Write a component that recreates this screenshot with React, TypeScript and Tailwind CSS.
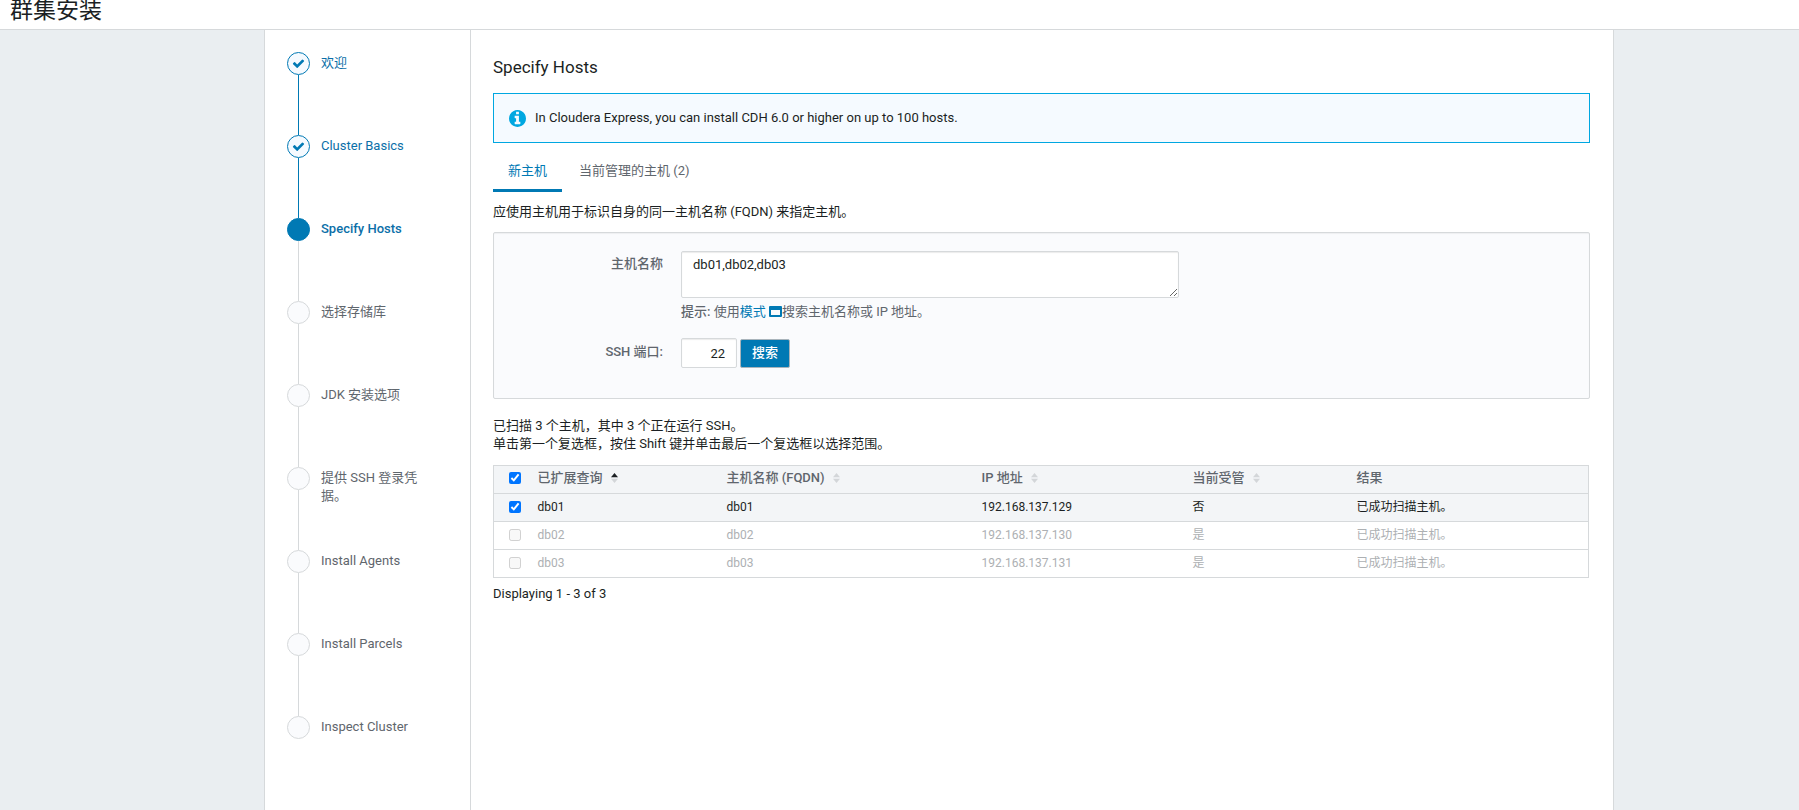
import React from "react";

type StepState = "done" | "current" | "todo";

const steps: { label: string; state: StepState }[] = [
  { label: "欢迎", state: "done" },
  { label: "Cluster Basics", state: "done" },
  { label: "Specify Hosts", state: "current" },
  { label: "选择存储库", state: "todo" },
  { label: "JDK 安装选项", state: "todo" },
  { label: "提供 SSH 登录凭据。", state: "todo" },
  { label: "Install Agents", state: "todo" },
  { label: "Install Parcels", state: "todo" },
  { label: "Inspect Cluster", state: "todo" },
];

const circleClass: Record<StepState, string> = {
  done: "border-[#0079b4] bg-[#f5faff]",
  current: "border-[#0079b4] bg-[#0079b4]",
  todo: "border-[#d6d9db] bg-[#fafbfd]",
};

const labelClass: Record<StepState, string> = {
  done: "text-[#0b6fa8]",
  current: "font-medium text-[#0b6fa8]",
  todo: "text-[#5f666d]",
};

const hosts = [
  { query: "db01", fqdn: "db01", ip: "192.168.137.129", managed: "否", result: "已成功扫描主机。", available: true },
  { query: "db02", fqdn: "db02", ip: "192.168.137.130", managed: "是", result: "已成功扫描主机。", available: false },
  { query: "db03", fqdn: "db03", ip: "192.168.137.131", managed: "是", result: "已成功扫描主机。", available: false },
];

function CheckIcon() {
  return (
    <svg viewBox="0 0 1792 1792" className="size-[13px] fill-[#0079b4]" aria-hidden="true">
      <path d="M1671 566q0 40-28 68l-724 724-136 136q-28 28-68 28t-68-28l-136-136-362-362q-28-28-28-68t28-68l136-136q28-28 68-28t68 28l294 295 656-657q28-28 68-28t68 28l136 136q28 28 28 68z" />
    </svg>
  );
}

function InfoIcon() {
  return (
    <svg viewBox="128 128 1536 1536" className="size-[17px] shrink-0 fill-[#00a7e1]" aria-hidden="true">
      <path d="M1152 1376v-160q0-14-9-23t-23-9h-96v-512q0-14-9-23t-23-9h-320q-14 0-23 9t-9 23v160q0 14 9 23t23 9h96v320h-96q-14 0-23 9t-9 23v160q0 14 9 23t23 9h448q14 0 23-9t9-23zm-128-896v-160q0-14-9-23t-23-9h-192q-14 0-23 9t-9 23v160q0 14 9 23t23 9h192q14 0 23-9t9-23zm640 416q0 209-103 385.5t-279.5 279.5-385.5 103-385.5-103-279.5-279.5-103-385.5 103-385.5 279.5-279.5 385.5-103 385.5 103 279.5 279.5 103 385.5z" />
    </svg>
  );
}

function WindowIcon() {
  return (
    <svg viewBox="0 0 13 11" className="inline-block h-[11px] w-[13px] align-[-1px]" aria-hidden="true">
      <path fill="#0079b4" fillRule="evenodd" d="M1 0h11a1 1 0 0 1 1 1v9a1 1 0 0 1-1 1H1a1 1 0 0 1-1-1V1a1 1 0 0 1 1-1zM2 4v5h9V4z" />
    </svg>
  );
}

function SortIcon({ ascending = false }: { ascending?: boolean }) {
  return (
    <svg viewBox="0 0 7 10" className="ml-2 inline-block h-[10px] w-[7px] align-[-1px]" aria-hidden="true">
      <path d="M3.5 0 7 4.2H0z" fill={ascending ? "#1b1f23" : "#d3d6d9"} />
      <path d="M3.5 10 7 5.8H0z" fill="#d3d6d9" />
    </svg>
  );
}

function Steps() {
  return (
    <ol className="w-[206px] shrink-0 border-r border-[#d6d9db] pt-[22px] pl-[22px]">
      {steps.map((step, i) => (
        <li key={step.label} className="flex gap-[11px]">
          <div className="flex flex-col items-center">
            <span className={`flex size-[23px] items-center justify-center rounded-full border ${circleClass[step.state]}`}>
              {step.state === "done" && <CheckIcon />}
            </span>
            {i < steps.length - 1 && (
              <span className={`h-[60px] w-px ${step.state === "done" ? "bg-[#0079b4]" : "bg-[#d6d9db]"}`} />
            )}
          </div>
          <span className={`w-[104px] pt-[2px] leading-[18px] ${labelClass[step.state]}`}>{step.label}</span>
        </li>
      ))}
    </ol>
  );
}

function HostForm() {
  return (
    <form
      className="mt-[11px] flex flex-col rounded-xs border border-[#d6d9db] bg-[#fafbfd] pt-[18px] pb-[30px] text-[#5f666d] shadow-[inset_0_1px_1px_rgba(0,0,0,0.05)]"
      onSubmit={(e) => e.preventDefault()}
    >
      <div className="flex">
        <label htmlFor="hostnames" className="mr-[18px] w-[169px] shrink-0 pt-1 text-right font-medium leading-[18px]">
          主机名称
        </label>
        <div className="flex flex-1 flex-col items-start">
          <textarea
            id="hostnames"
            defaultValue="db01,db02,db03"
            className="h-[47px] w-[498px] max-w-full rounded-xs border border-[#d6d9db] bg-white px-[11px] py-[4px] leading-[18px] text-[#1b1f23] shadow-[inset_0_1px_1px_rgba(0,0,0,0.08)]"
          />
          <p className="mt-[5px] leading-[18px]">
            <strong className="font-medium">提示:</strong> 使用
            <a href="#patterns" className="text-[#0079b4]">
              模式 <WindowIcon />
            </a>
            搜索主机名称或 IP 地址。
          </p>
        </div>
      </div>
      <div className="mt-[17px] flex">
        <label htmlFor="ssh-port" className="mr-[18px] w-[169px] shrink-0 pt-[5px] text-right font-medium leading-[18px]">
          SSH 端口:
        </label>
        <input
          id="ssh-port"
          type="text"
          defaultValue="22"
          className="h-[30px] w-[56px] rounded-xs border border-[#d6d9db] bg-white px-[11px] text-right text-[#1b1f23] shadow-[inset_0_1px_1px_rgba(0,0,0,0.08)]"
        />
        <button
          type="submit"
          className="mt-px ml-[3px] h-[29px] rounded-xs border border-[#a9b4bb] bg-[#0079b4] px-[11px] pb-[2px] font-medium text-white"
        >
          搜索
        </button>
      </div>
    </form>
  );
}

function HostTable() {
  return (
    <table className="mt-[12px] mr-px table-fixed border-collapse border border-[#d6d9db] text-[12px] leading-[18px]">
      <colgroup>
        <col className="w-[39px]" />
        <col className="w-[189px]" />
        <col className="w-[255px]" />
        <col className="w-[211px]" />
        <col className="w-[164px]" />
        <col />
      </colgroup>
      <thead>
        <tr className="h-7 border-b border-[#d6d9db] bg-[#f3f5f7] text-left text-[13px] text-[#5f666d] *:pb-[3px] *:pl-[5px] *:font-medium">
          <th>
            <input type="checkbox" defaultChecked aria-label="全选" className="ml-[10px] block size-3" />
          </th>
          <th>已扩展查询<SortIcon ascending /></th>
          <th>主机名称 (FQDN)<SortIcon /></th>
          <th>IP 地址<SortIcon /></th>
          <th>当前受管<SortIcon /></th>
          <th>结果</th>
        </tr>
      </thead>
      <tbody>
        {hosts.map((h) => (
          <tr
            key={h.query}
            className={`h-7 border-b border-[#d6d9db] *:pb-[2px] *:pl-[5px] ${h.available ? "bg-[#f3f5f7] text-[#1b1f23]" : "bg-white text-[#adb0b3]"}`}
          >
            <td>
              <input
                type="checkbox"
                defaultChecked={h.available}
                disabled={!h.available}
                aria-label={h.query}
                className="ml-[10px] block size-3"
              />
            </td>
            <td>{h.query}</td>
            <td>{h.fqdn}</td>
            <td>{h.ip}</td>
            <td>{h.managed}</td>
            <td>{h.result}</td>
          </tr>
        ))}
      </tbody>
    </table>
  );
}

export default function App() {
  return (
    <div className="flex min-h-screen flex-col bg-[#eaeef1] font-[Roboto,'Noto_Sans_CJK_SC',sans-serif] text-[13px] text-[#1b1f23]">
      <header className="border-b border-[#d6d9db] bg-white px-[10px] pb-2">
        <h1 className="text-[23px] leading-[21px]">群集安装</h1>
      </header>
      <div className="mr-[185px] ml-[264px] flex flex-1 border-x border-[#d6d9db] bg-white">
        <Steps />
        <main className="flex min-w-0 flex-1 flex-col pt-[25px] pr-[23px] pl-[22px]">
          <h2 className="text-[17px] leading-[24px]">Specify Hosts</h2>
          <div className="mt-[14px] flex h-[50px] items-center gap-[9px] border border-[#00a7e1] bg-[#f5faff] px-[15px]">
            <InfoIcon />
            <p>In Cloudera Express, you can install CDH 6.0 or higher on up to 100 hosts.</p>
          </div>
          <div role="tablist" className="mt-[17px] flex gap-[2px]">
            <button
              type="button"
              role="tab"
              aria-selected="true"
              className="border-b-3 border-[#0079b4] px-[15px] pt-[2px] pb-[9px] leading-[18px] text-[#0079b4]"
            >
              新主机
            </button>
            <button
              type="button"
              role="tab"
              aria-selected="false"
              className="border-b-3 border-transparent px-[15px] pt-[2px] pb-[9px] leading-[18px] text-[#5f666d]"
            >
              当前管理的主机 (2)
            </button>
          </div>
          <p className="mt-[11px] leading-[18px]">应使用主机用于标识自身的同一主机名称 (FQDN) 来指定主机。</p>
          <HostForm />
          <div className="mt-[18px] leading-[18px]">
            <p>已扫描 3 个主机，其中 3 个正在运行 SSH。</p>
            <p>单击第一个复选框，按住 Shift 键并单击最后一个复选框以选择范围。</p>
          </div>
          <HostTable />
          <p className="mt-[7px] leading-[18px]">Displaying 1 - 3 of 3</p>
        </main>
      </div>
    </div>
  );
}
